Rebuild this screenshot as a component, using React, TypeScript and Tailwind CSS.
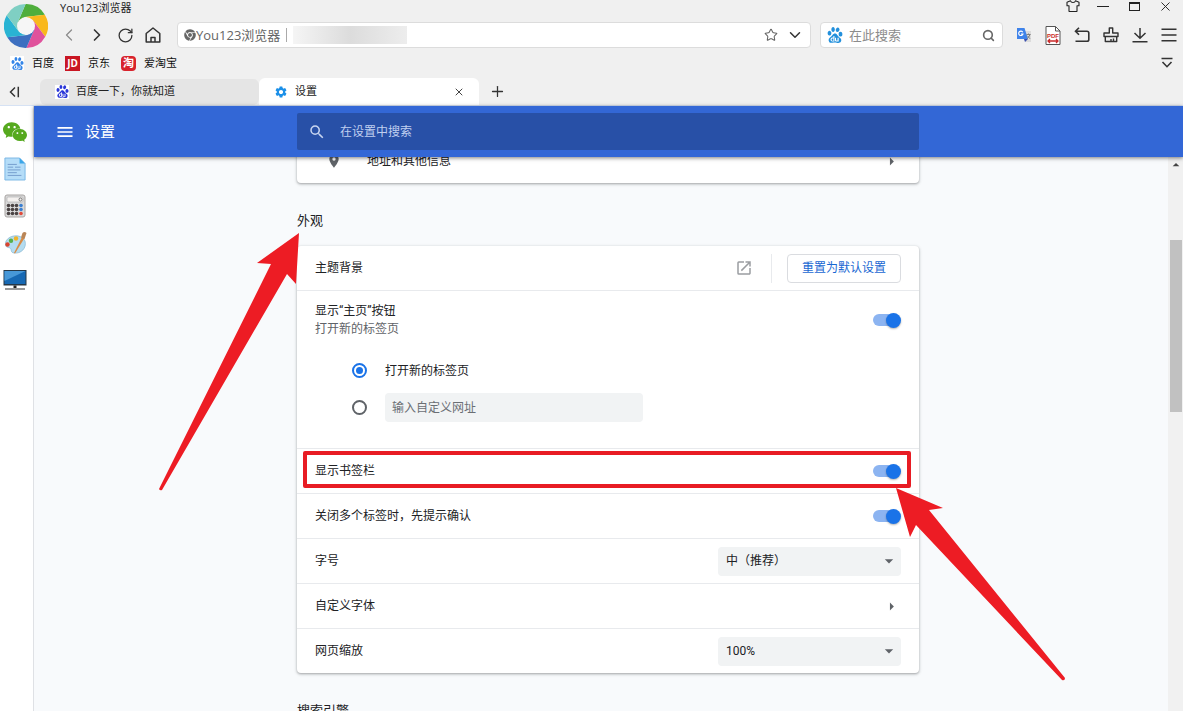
import { useState } from 'react'
import type { ReactNode } from 'react'
import { ChevronDown, ChevronLeft, ChevronRight, Plus, RotateCw, Search, Star, X } from 'lucide-react'
import { FaChrome } from 'react-icons/fa'
import { MdArrowDropDown, MdArrowRight, MdArrowDropUp, MdMenu, MdOpenInNew, MdPlace, MdSearch, MdSettings } from 'react-icons/md'
import { SiBaidu, SiWechat } from 'react-icons/si'

const blades = ['#4fae3c', '#f9b81c', '#e0529c', '#3d6fc0', '#29b3d3', '#7fcfc3']

function point(radius: number, degrees: number) {
    const a = (degrees * Math.PI) / 180
    return `${(22 + radius * Math.cos(a)).toFixed(2)} ${(22 + radius * Math.sin(a)).toFixed(2)}`
}

function Logo() {
    return (
        <svg viewBox="0 0 44 44" className="size-11 shrink-0" aria-hidden="true">
            {blades.map((color, i) => {
                const start = -91 + i * 60
                const end = start + 60
                return (
                    <path
                        key={color}
                        fill={color}
                        d={`M${point(9, start - 66)} L${point(22, start)} A22 22 0 0 1 ${point(22, end)} L${point(9, end - 66)} Z`}
                    />
                )
            })}
            <circle cx="22" cy="22" r="9" fill="#f6f6f6" />
        </svg>
    )
}

function ShirtIcon() {
    return (
        <svg viewBox="0 0 14 12" className="h-3 w-3.5" fill="none" stroke="#222" strokeWidth="1.1" strokeLinejoin="round">
            <path d="M4.5 .8 1 2.2v3.6h2V11q0 .5.5.5h7q.5 0 .5-.5V5.800h2V2.200L9.500.8Q9 2.500 7 2.500T4.500.8Z" />
        </svg>
    )
}

function HomeIcon() {
    return (
        <svg viewBox="0 0 16 16" className="size-4" fill="none" stroke="#333" strokeWidth="1.500" strokeLinejoin="round">
            <path d="M1.200 6.500 8 1l6.800 5.500V15H1.200ZM6 15v-4.500h4V15" />
        </svg>
    )
}

function TranslateIcon() {
    return (
        <svg viewBox="0 0 16 16" className="size-4">
            <path d="M7 4h8v11H9z" fill="#dcdcdc" />
            <path d="M1 1h7.500l3.500 11H1z" fill="#3f83ea" />
            <path d="m8 12 4 0-3 3z" fill="#3a4fae" />
            <path d="M6.800 5.200A2.200 2.200 0 1 0 7 7H5" fill="none" stroke="#fff" strokeWidth="1.100" />
            <path d="M10.500 7.500h4M12.500 6.500v1M14 7.500q-1 3-3 4M11.500 8.800l2.500 3" fill="none" stroke="#777" strokeWidth=".9" />
        </svg>
    )
}

function PdfIcon() {
    return (
        <svg viewBox="0 0 16 19" className="h-[19px] w-4">
            <path d="M1 .5h9.500L15 5v13.500H1z" fill="#fff" stroke="#555" />
            <path d="M10.500.5V5H15" fill="none" stroke="#555" />
            <text x="8" y="11.500" textAnchor="middle" fontSize="6" fontWeight="700" fill="#c92a2a" fontFamily="Liberation Sans, sans-serif">PDF</text>
            <path d="M3 15h10M5 13l-2 2 2 2M11 13l2 2-2 2" fill="none" stroke="#c92a2a" strokeWidth="1.300" />
        </svg>
    )
}

function UndoIcon() {
    return (
        <svg viewBox="0 0 16 16" className="size-4" fill="none" stroke="#333" strokeWidth="1.600">
            <path d="M5 .8 1.500 4.300 5 7.800M1.500 4.300H13q1.800 0 1.800 1.800v6.300q0 1.800-1.800 1.800H1.500" />
        </svg>
    )
}

function BrushIcon() {
    return (
        <svg viewBox="0 0 16 16" className="size-4" fill="none" stroke="#333" strokeWidth="1.400" strokeLinejoin="round">
            <path d="M6.300 6V1h3.400v5H15v3.500H1V6zM2.300 9.500v5h11.400v-5M8 14.500V12M10.500 14.500v-3" />
        </svg>
    )
}

function DownloadIcon() {
    return (
        <svg viewBox="0 0 16 16" className="size-4" fill="none" stroke="#333" strokeWidth="1.500">
            <path d="M8 1v10M2.500 6 8 11.300 13.500 6M.5 14.800h15" />
        </svg>
    )
}

function MenuIcon() {
    return (
        <svg viewBox="0 0 16 16" className="size-4" fill="none" stroke="#333" strokeWidth="1.500">
            <path d="M.5 2.200h15M.5 8h15M.5 13.800h15" />
        </svg>
    )
}

function NotepadIcon() {
    return (
        <svg viewBox="0 0 24 26" className="h-6 w-[22px]">
            <path d="M1 1h16l6 6v18H1z" fill="#b5ddf8" stroke="#76b5e4" />
            <path d="M17 1v6h6z" fill="#3ba6e8" />
            <path d="M4 8h10M4 11h6M12 11h6M4 14h14M4 17h10M4 20h15" stroke="#7199ca" strokeWidth="1" />
        </svg>
    )
}

function CalculatorIcon() {
    return (
        <svg viewBox="0 0 22 24" className="h-6 w-[22px]">
            <rect x="1" y="1" width="20" height="22" rx="2" fill="#d9d9d9" stroke="#a9a5a3" />
            <rect x="3" y="3" width="16" height="5" rx="1" fill="#f4f1ef" stroke="#aaa" strokeWidth=".6" />
            <circle cx="16.500" cy="5.500" r="1.500" fill="none" stroke="#777" />
            {[11.5, 15.5, 19.5].map((y, row) =>
                [4.5, 8.5, 12.5, 17].map((x, col) => (
                    <circle key={`${x}-${y}`} cx={x} cy={y} r="1.800" fill={col < 3 ? '#4b4444' : row < 2 ? '#3b7fd0' : '#e04a3a'} />
                ))
            )}
        </svg>
    )
}

function PaletteIcon() {
    return (
        <svg viewBox="0 0 24 24" className="size-6">
            <path d="M3 10C7 3 19 3 22 10c2 7-4 13-11 12-4-.5-2-4-4-5S1 17 3 10Z" fill="#b4dcf0" stroke="#8ab9d3" strokeWidth=".7" />
            <circle cx="4.500" cy="13.500" r="2.200" fill="#d9452f" />
            <circle cx="8" cy="9.800" r="2.200" fill="#58b04a" />
            <circle cx="13" cy="7.500" r="2.200" fill="#f0b429" />
            <path d="m11 22 8-16 2.500 1L12 22.500z" fill="#d98b45" />
            <path d="M18 6.500 19.500 2q2-2 4 0L21.500 8z" fill="#ba8657" />
        </svg>
    )
}

function MonitorIcon() {
    return (
        <svg viewBox="0 0 24 22" className="h-[22px] w-6">
            <rect x=".5" y="1" width="23" height="15.500" fill="#263847" />
            <path d="M1.500 2h21v13h-21z" fill="#1769b4" />
            <path d="M1.500 2h21L1.500 12z" fill="#4798d8" />
            <path d="M10.500 16.500h3v2.500h-3z" fill="#222" />
            <path d="M2 20h20" stroke="#777" strokeWidth="1.500" />
        </svg>
    )
}

const shortcuts = [
    { name: '微信', icon: <SiWechat size={24} color="#56a91f" /> },
    { name: '记事本', icon: <NotepadIcon /> },
    { name: '计算器', icon: <CalculatorIcon /> },
    { name: '画图', icon: <PaletteIcon /> },
    { name: '桌面', icon: <MonitorIcon /> },
]

const tools = [
    { name: '翻译', icon: <TranslateIcon /> },
    { name: 'PDF', icon: <PdfIcon /> },
    { name: '恢复', icon: <UndoIcon /> },
    { name: '清理', icon: <BrushIcon /> },
    { name: '下载', icon: <DownloadIcon /> },
    { name: '菜单', icon: <MenuIcon /> },
]

function NavButton({ label, children }: { label: string; children: ReactNode }) {
    return (
        <button aria-label={label} className="flex w-7 items-center justify-center text-[#333]">
            {children}
        </button>
    )
}

function BrowserHeader() {
    return (
        <header className="[font-family:'Open_Sans','Noto_Sans_CJK_SC',sans-serif]">
            <div className="flex pl-1">
                <div className="pt-1">
                    <Logo />
                </div>
                <div className="min-w-0 flex-1">
                    <div className="flex h-[18px] justify-between pl-3">
                        <span className="text-[11px] leading-4 text-[#222]">You123浏览器</span>
                        <div className="flex h-3 items-center gap-[15px] pr-2.5">
                            <button aria-label="皮肤"><ShirtIcon /></button>
                            <button aria-label="最小化" className="flex w-4 justify-center"><span className="h-px w-3 bg-[#222]" /></button>
                            <button aria-label="最大化" className="flex w-4 justify-center"><span className="h-[9px] w-[11px] border border-t-2 border-[#222]" /></button>
                            <button aria-label="关闭" className="flex w-4 justify-center"><X size={15} strokeWidth={1.5} color="#222" /></button>
                        </div>
                    </div>
                    <div className="flex h-[34px] items-center pl-[7px]">
                        <NavButton label="后退"><ChevronLeft size={20} strokeWidth={1.5} color="#8c8c8c" /></NavButton>
                        <NavButton label="前进"><ChevronRight size={20} strokeWidth={2} /></NavButton>
                        <NavButton label="刷新"><RotateCw size={17} strokeWidth={1.8} /></NavButton>
                        <NavButton label="主页"><HomeIcon /></NavButton>
                        <div className="ml-2.5 flex h-[26px] min-w-0 flex-1 items-center rounded border border-[#dcdcdc] bg-white px-1.5 text-[#666]">
                            <FaChrome size={12} className="shrink-0" />
                            <input aria-label="地址" defaultValue="You123浏览器" className="w-[86px] bg-transparent text-[13px] leading-5 outline-none" />
                            <span className="ml-1 h-3.5 w-px bg-[#aaa]" />
                            <span className="ml-1.5 h-[18px] w-[114px] shrink-0 bg-linear-to-r from-[#f5f5f5] via-[#dcdcdc] to-[#ededed]" />
                            <button aria-label="收藏" className="ml-auto"><Star size={14} strokeWidth={1.8} /></button>
                            <button aria-label="展开地址" className="ml-2"><ChevronDown size={18} strokeWidth={2} color="#333" /></button>
                        </div>
                        <div className="ml-[9px] flex h-[26px] w-[183px] items-center rounded border border-[#dcdcdc] bg-white px-1.5">
                            <SiBaidu size={16} color="#2390dc" className="shrink-0" />
                            <input aria-label="搜索" placeholder="在此搜索" className="ml-1.5 min-w-0 flex-1 text-[13px] leading-5 outline-none placeholder:text-[#8c8c8c]" />
                            <button aria-label="开始搜索" className="mr-px"><Search size={13} strokeWidth={3} color="#666" /></button>
                        </div>
                        <div className="ml-1.5 flex">
                            {tools.map((tool) => (
                                <button key={tool.name} aria-label={tool.name} className="flex w-[29px] items-center justify-center">
                                    {tool.icon}
                                </button>
                            ))}
                        </div>
                    </div>
                </div>
            </div>

            <nav className="flex h-[22px] items-center gap-[11px] pr-2.5 pl-2.5 text-[11px] text-[#111]">
                <a href="#baidu" className="flex items-center gap-2">
                    <span className="flex size-3.5 items-center justify-center bg-white"><SiBaidu size={13} color="#3385e8" /></span>
                    百度
                </a>
                <a href="#jd" className="flex items-center gap-2">
                    <span className="flex size-[15px] items-center justify-center bg-[#c91623] text-[10px] font-bold text-white">JD</span>
                    京东
                </a>
                <a href="#taobao" className="flex items-center gap-2">
                    <span className="flex size-[15px] items-center justify-center rounded-sm bg-[#d8232c] text-[11px] font-bold text-white">淘</span>
                    爱淘宝
                </a>
                <button aria-label="更多书签" className="ml-auto">
                    <svg viewBox="0 0 12 12" className="size-3" fill="none" stroke="#333" strokeWidth="1.600">
                        <path d="M.5 1.500h11M1.500 5 6 9.700 10.500 5" />
                    </svg>
                </button>
            </nav>

            <div className="flex h-8 items-center border-b border-[#d6e2f4] pt-1 text-[11px] text-[#222]">
                <button aria-label="收起侧栏" className="flex w-10 pl-2">
                    <svg viewBox="0 0 12 12" className="size-3" fill="none" stroke="#333" strokeWidth="1.500">
                        <path d="M7 1.500 2.500 6 7 10.500M10.300.8v10.400" />
                    </svg>
                </button>
                <button className="flex h-[26px] w-[219px] items-center gap-[7px] rounded-md bg-[#e5e5e5] pl-[15px]">
                    <span className="flex size-3.5 items-center justify-center bg-white"><SiBaidu size={13} color="#2a36d8" /></span>
                    百度一下，你就知道
                </button>
                <div className="flex h-full w-[220px] items-center justify-between rounded-t-md bg-white pr-3.5 pl-[15px]">
                    <button className="flex items-center gap-[7px]">
                        <MdSettings size={14} color="#1a8fe8" />
                        设置
                    </button>
                    <button aria-label="关闭标签"><X size={12} strokeWidth={2} color="#444" /></button>
                </div>
                <button aria-label="新建标签" className="ml-2.5"><Plus size={17} strokeWidth={1.8} color="#333" /></button>
            </div>
        </header>
    )
}

function Toggle({ label }: { label: string }) {
    const [on, setOn] = useState(true)
    return (
        <label className="relative flex h-[15px] w-7 cursor-pointer items-center">
            <input type="checkbox" aria-label={label} checked={on} onChange={() => setOn(!on)} className="peer sr-only" />
            <span className="h-3 w-[26px] rounded-full bg-[#bdc1c6] peer-checked:bg-[#8cb4f1]" />
            <span className="absolute left-0 size-[15px] rounded-full bg-white shadow-[0_1px_2px_rgba(0,0,0,0.3)] peer-checked:left-[13px] peer-checked:bg-[#1a73e8]" />
        </label>
    )
}

function Dropdown({ id, options }: { id: string; options: string[] }) {
    return (
        <div className="relative w-[183px]">
            <select id={id} className="h-[29px] w-full appearance-none rounded bg-[#f1f3f4] pl-2 text-[#202124] outline-none">
                {options.map((option) => (
                    <option key={option}>{option}</option>
                ))}
            </select>
            <MdArrowDropDown size={20} color="#5f6368" className="pointer-events-none absolute top-1 right-0.5" />
        </div>
    )
}

function Row({ children }: { children: ReactNode }) {
    return <div className="flex h-[45px] items-center justify-between border-t border-[#e8eaed] px-[18px]">{children}</div>
}

const radioStyle =
    'flex size-[15px] shrink-0 appearance-none items-center justify-center rounded-full border-2 border-[#5f6368] checked:border-[#1a73e8] checked:before:size-[7px] checked:before:rounded-full checked:before:bg-[#1a73e8]'

const cardStyle = 'relative rounded bg-white shadow-[0_1px_2px_rgba(60,64,67,0.3),0_1px_3px_1px_rgba(60,64,67,0.15)]'

function AppearanceCard() {
    const [home, setHome] = useState('newtab')
    return (
        <div className={cardStyle}>
            <div className="flex h-11 items-center px-[18px]">
                <span className="flex-1">主题背景</span>
                <a href="#themes" aria-label="打开主题背景"><MdOpenInNew size={18} color="#9a9da1" /></a>
                <span className="mx-[15px] ml-[18px] h-[29px] w-px bg-[#e8eaed]" />
                <button className="h-[29px] w-[114px] rounded border border-[#dadce0] text-[#1967d2]">重置为默认设置</button>
            </div>

            <div className="border-t border-[#e8eaed] px-[18px] pb-[22px]">
                <div className="flex h-[58px] items-center justify-between leading-[18px]">
                    <div>
                        <p>显示“主页”按钮</p>
                        <p className="text-[#5f6368]">打开新的标签页</p>
                    </div>
                    <Toggle label="显示“主页”按钮" />
                </div>
                <div className="mt-[3px] pl-[37px]">
                    <label className="flex h-[37px] items-center gap-[18px]">
                        <input type="radio" name="home" className={radioStyle} checked={home === 'newtab'} onChange={() => setHome('newtab')} />
                        打开新的标签页
                    </label>
                    <div className="flex h-[37px] items-center gap-[18px]">
                        <input type="radio" name="home" aria-label="自定义网址" className={radioStyle} checked={home === 'custom'} onChange={() => setHome('custom')} />
                        <input aria-label="输入自定义网址" placeholder="输入自定义网址" className="h-[29px] w-[258px] rounded bg-[#f1f3f4] px-[7px] outline-none placeholder:text-[#6b6f74]" />
                    </div>
                </div>
            </div>

            <div className="relative">
                <Row>
                    <span>显示书签栏</span>
                    <Toggle label="显示书签栏" />
                </Row>
                <span className="pointer-events-none absolute top-[3px] right-[8px] bottom-[5px] left-[6px] rounded-xs border-4 border-[#e81c24]" />
            </div>
            <Row>
                <span>关闭多个标签时，先提示确认</span>
                <Toggle label="关闭多个标签时，先提示确认" />
            </Row>
            <Row>
                <label htmlFor="font-size">字号</label>
                <Dropdown id="font-size" options={['中（推荐）', '小', '大']} />
            </Row>
            <Row>
                <span>自定义字体</span>
                <button aria-label="自定义字体"><MdArrowRight size={19} color="#5f6368" /></button>
            </Row>
            <Row>
                <label htmlFor="zoom">网页缩放</label>
                <Dropdown id="zoom" options={['100%', '125%', '150%']} />
            </Row>

            {/* arrows pointing at the section title and the bookmarks bar switch */}
            <svg className="pointer-events-none absolute top-0 left-0 size-px overflow-visible" fill="#ed1c24" aria-hidden="true">
                <path d="M2-13-40 17-26 18-138 243q1 2 3 1L-10 28-1 38Z" />
                <path d="M599 242 613 291 619 279 765 434q3 1 3-2L632 264 646 262Z" />
            </svg>
        </div>
    )
}

export default function App() {
    return (
        <div className="flex h-screen flex-col overflow-hidden bg-[#f0f0f0]">
            <BrowserHeader />
            <div className="flex min-h-0 flex-1">
                <aside className="flex w-[34px] shrink-0 flex-col gap-[13px] border-r border-[#dfe1e5] bg-white pt-3.5 pl-[3px]">
                    {shortcuts.map((item) => (
                        <button key={item.name} aria-label={item.name} className="flex size-6 items-center justify-center">
                            {item.icon}
                        </button>
                    ))}
                </aside>

                <div className="flex min-w-0 flex-1 flex-col text-xs text-[#202124] [font-family:Roboto,'Noto_Sans_CJK_SC',sans-serif]">
                    <div className="z-10 grid h-[51px] shrink-0 grid-cols-[1fr_minmax(0,622px)_1fr] items-center bg-[#3367d6] pr-px shadow-[0_1px_4px_rgba(0,0,0,0.5)]">
                        <div className="flex items-center gap-2.5 pl-[21px] text-white">
                            <button aria-label="主菜单"><MdMenu size={20} /></button>
                            <h1 className="text-[15px] leading-6">设置</h1>
                        </div>
                        <label className="flex h-[37px] items-center gap-3.5 rounded-xs bg-[#2850a7] pl-[11px] text-[#c8d5f0]">
                            <MdSearch size={18} />
                            <input aria-label="在设置中搜索" placeholder="在设置中搜索" className="min-w-0 flex-1 outline-none placeholder:text-[#c0cff0]" />
                        </label>
                    </div>

                    <div className="flex min-h-0 flex-1 bg-[#f8fafc]">
                        <main className="min-w-0 flex-1 overflow-hidden pl-3.5">
                            <div className="mx-auto -mt-[18px] max-w-[622px]">
                                <div className={cardStyle}>
                                    <div className="flex h-[44px] items-center px-[18px]">
                                        <MdPlace size={16} color="#5f6368" className="ml-[11px]" />
                                        <span className="ml-[25px] flex-1">地址和其他信息</span>
                                        <button aria-label="地址和其他信息"><MdArrowRight size={19} color="#5f6368" /></button>
                                    </div>
                                </div>
                                <h2 className="mt-7 mb-[15px] text-[13px] leading-5">外观</h2>
                                <AppearanceCard />
                                <h2 className="mt-7 mb-[15px] text-[13px] leading-5">搜索引擎</h2>
                            </div>
                        </main>
                        <div className="flex w-[15px] shrink-0 flex-col items-center bg-[#f1f1f1]">
                            <MdArrowDropUp size={16} color="#444" />
                            <div className="mt-[67px] h-[172px] w-3 bg-[#c1c1c1]" />
                        </div>
                    </div>
                </div>
            </div>
        </div>
    )
}
